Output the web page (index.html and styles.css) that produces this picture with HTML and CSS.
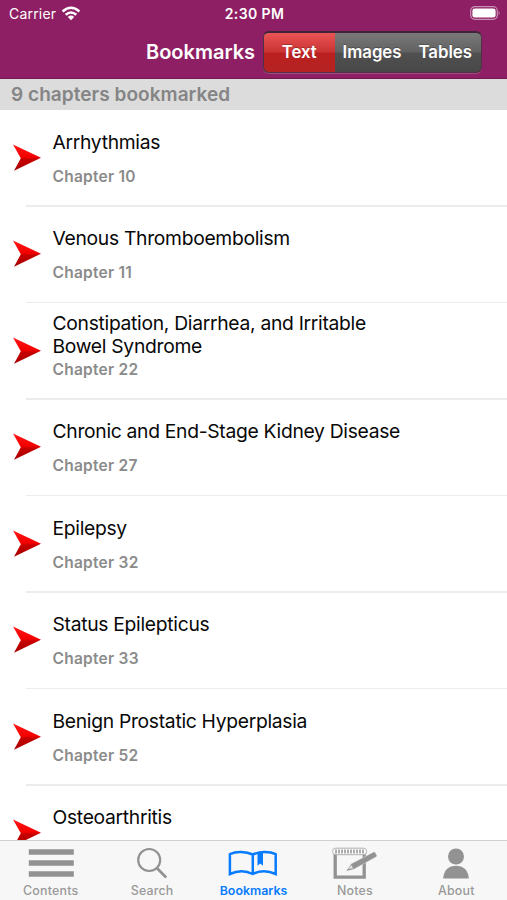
FILE: index.html
```html
<!DOCTYPE html>
<html lang="en">
<head>
<meta charset="utf-8">
<title>Bookmarks</title>
<link rel="stylesheet" href="styles.css">
</head>
<body>
<svg class="defs" width="0" height="0" aria-hidden="true">
  <defs>
    <linearGradient id="red" x1="0" y1="0" x2="0" y2="1">
      <stop offset="0" stop-color="#ff1818"/><stop offset=".48" stop-color="#f40000"/><stop offset=".56" stop-color="#c60000"/><stop offset="1" stop-color="#a80000"/>
    </linearGradient>
    <symbol id="arrow" viewBox="0 0 30 28"><path d="M1 .5 29 13.7 2 26.7 8.8 14.2Z" fill="url(#red)"/></symbol>
  </defs>
</svg>
<div class="screen">
  <header class="top">
    <div class="status">
      <div class="carrier"><span>Carrier</span>
        <svg width="20" height="15" viewBox="0 0 20 15" fill="none" stroke="#fff" stroke-width="2.5"><path d="M1.6 5.5Q10-2 18.4 5.5M4.7 8.8Q10 4.2 15.3 8.8"/><path d="M6.8 11Q10 8.2 13.2 11L10 14.3Z" fill="#fff" stroke="none"/></svg>
      </div>
      <span class="time">2:30 PM</span>
      <svg class="battery" width="31" height="14" viewBox="0 0 31 14"><rect x=".7" y=".7" width="26.6" height="12.6" rx="4" fill="none" stroke="#c590b1" stroke-width="1.2"/><rect x="2.4" y="2.4" width="23.2" height="9.2" rx="2.3" fill="#fff"/><path d="M28.6 4.7q2 2.3 0 4.6z" fill="#c590b1"/></svg>
    </div>
    <div class="nav">
      <h1>Bookmarks</h1>
      <div class="segments"><span class="seg active"><b>Text</b></span><span class="seg"><b>Images</b></span><span class="seg"><b>Tables</b></span></div>
    </div>
  </header>
  <div class="summary"><span>9 chapters bookmarked</span></div>
  <main class="list">
    <article class="row"><svg class="arrow"><use href="#arrow"/></svg><div class="copy"><h2>Arrhythmias</h2><p>Chapter 10</p></div></article>
    <article class="row"><svg class="arrow"><use href="#arrow"/></svg><div class="copy"><h2>Venous Thromboembolism</h2><p>Chapter 11</p></div></article>
    <article class="row double"><svg class="arrow"><use href="#arrow"/></svg><div class="copy"><h2>Constipation, Diarrhea, and Irritable<br>Bowel Syndrome</h2><p>Chapter 22</p></div></article>
    <article class="row"><svg class="arrow"><use href="#arrow"/></svg><div class="copy"><h2>Chronic and End-Stage Kidney Disease</h2><p>Chapter 27</p></div></article>
    <article class="row"><svg class="arrow"><use href="#arrow"/></svg><div class="copy"><h2>Epilepsy</h2><p>Chapter 32</p></div></article>
    <article class="row"><svg class="arrow"><use href="#arrow"/></svg><div class="copy"><h2>Status Epilepticus</h2><p>Chapter 33</p></div></article>
    <article class="row"><svg class="arrow"><use href="#arrow"/></svg><div class="copy"><h2>Benign Prostatic Hyperplasia</h2><p>Chapter 52</p></div></article>
    <article class="row"><svg class="arrow"><use href="#arrow"/></svg><div class="copy"><h2>Osteoarthritis</h2></div></article>
  </main>
  <nav class="tabs">
    <a class="tab"><svg width="46" height="38" viewBox="0 0 46 38" fill="#929292"><path d="M.8 8.2h45v5.6H.8zM.8 19.2h45v5.6H.8zM.8 30.2h45v5.6H.8z"/></svg><span>Contents</span></a>
    <a class="tab"><svg width="46" height="38" viewBox="0 0 46 38" fill="none" stroke="#929292"><circle cx="20.2" cy="19" r="11" stroke-width="2.2"/><path d="m27.8 27 9.4 9.5" stroke-width="2.7"/></svg><span>Search</span></a>
    <a class="tab active"><svg width="50" height="38" viewBox="0 0 50 38" fill="none" stroke="#087cff" stroke-width="2.5"><path d="M24.8 13.5C18 10.5 8.5 10 1.9 13.2V33C9 29.8 18 29.7 24.8 33C31.5 29.7 40.5 29.8 47.7 33V13.2C41 10 31.8 10.5 24.8 13.5ZM24.8 13.5V33"/><path d="M29.5 12.1h5.5v12.7l-2.7-2.3-2.8 2.3z" fill="#087cff" stroke="none"/></svg><span>Bookmarks</span></a>
    <a class="tab"><svg width="46" height="38" viewBox="0 0 46 38"><path d="M3.2 11h29v25.2h-29z" fill="none" stroke="#929292" stroke-width="3.3"/><rect x=".6" y="7.2" width="34" height="6.5" rx="3.2" fill="#fff" stroke="#a6a6a6" stroke-width=".9"/><path d="M4 8.6v4M7 8.6v4M10 8.6v4M13 8.6v4M16 8.6v4M19 8.6v4M22 8.6v4M25 8.6v4M28 8.6v4M31 8.6v4" stroke="#929292" stroke-width="1.5"/><path d="m19.2 22.8 22.4-11.7q1.1-.5 1.7.5l1.4 2.7q.4 1-.6 1.6L21.9 28.2l-7.8 2.1z" fill="#929292" stroke="#f7f7f7" stroke-width=".4"/><path d="m16.2 28 3.2-3.8 1.7 3z" fill="#e4e4e4"/></svg><span>Notes</span></a>
    <a class="tab"><svg width="46" height="38" viewBox="0 0 46 38" fill="#929292"><circle cx="23" cy="15.5" r="8"/><path d="M10.2 37.4C10.8 28.7 16 24.8 23 24.8s12.2 3.9 12.8 12.6z"/></svg><span>About</span></a>
  </nav>
</div>
</body>
</html>
```
FILE: styles.css
```css
* { box-sizing: border-box; }
body { margin: 0; font-family: Inter, "Liberation Sans", sans-serif; }
h1, h2, p { margin: 0; }
.defs { position: absolute; }
.screen { width: 507px; height: 900px; display: flex; flex-direction: column; overflow: hidden; background: #fff; }
.top { height: 79px; flex: none; background: #8e1f64; color: #fff; border-bottom: 1px solid #741850; }
.status { height: 27px; display: grid; grid-template-columns: 1fr auto 1fr; align-items: center; padding: 0 6px 0 9px; }
.carrier { display: flex; align-items: center; gap: 5px; font-size: 14px; letter-spacing: .2px; }
.carrier svg { margin-top: -1px; }
.time { margin-right: 1px; font-size: 14px; font-weight: 600; letter-spacing: .4px; }
.battery { justify-self: end; margin-top: -1px; }
.nav { height: 50px; display: flex; align-items: center; padding: 0 24px 0 146px; }
h1 { width: 116.5px; font-size: 20px; line-height: 24px; font-weight: 600; white-space: nowrap; }
.segments { width: 219px; height: 42px; flex: none; margin-top: -1px; display: grid; grid-template-columns: 71.5px 74px 72.5px; border-radius: 6px; overflow: hidden; border: 1px solid #503047; border-top: 2px solid #402437; box-shadow: 0 1px #a34b81; background: linear-gradient(#797979 0, #626262 48%, #505050 52%, #484848 100%); }
.seg { display: flex; justify-content: center; align-items: center; font-size: 16.8px; text-shadow: 0 -1px rgba(0,0,0,.25); }
.seg b { font-weight: 600; }
.seg.active { background: linear-gradient(#e95454 0, #cb3434 48%, #bb2020 52%, #b62222 100%); }
.summary { height: 30.5px; flex: none; padding-left: 11px; background: #dcdcdc; color: #858585; font-size: 19px; line-height: 31px; font-weight: 600; letter-spacing: .05px; }
.list { flex: 1; min-height: 0; overflow: hidden; }
.row { height: 96.5px; position: relative; display: flex; padding-left: 12px; }
.row::after { content: ""; position: absolute; left: 26px; right: 0; bottom: -.5px; height: 1.5px; background: #ececed; }
.arrow { width: 30px; height: 28px; flex: none; margin: 34px 10.5px 0 0; }
.copy { padding-top: 21px; }
h2 { font-size: 19.3px; line-height: 23.5px; font-weight: 400; letter-spacing: -.3px; color: #080808; white-space: nowrap; }
p { margin-top: 11.5px; font-size: 15.5px; line-height: 22px; font-weight: 600; letter-spacing: .25px; color: #8b8b8b; }
.double .copy { padding-top: 9px; }
.double p { margin-top: 0; }
.tabs { height: 60.5px; flex: none; display: grid; grid-template-columns: repeat(5, 1fr); border-top: 1px solid #cfcfcf; background: #f7f7f7; }
.tab { display: flex; flex-direction: column; align-items: center; color: #999; font-size: 12.4px; line-height: 16px; font-weight: 500; letter-spacing: .2px; }
.tab svg { flex: none; }
.tab span { margin-top: 4px; }
.tab.active { color: #087cff; font-weight: 600; letter-spacing: 0; }
```
